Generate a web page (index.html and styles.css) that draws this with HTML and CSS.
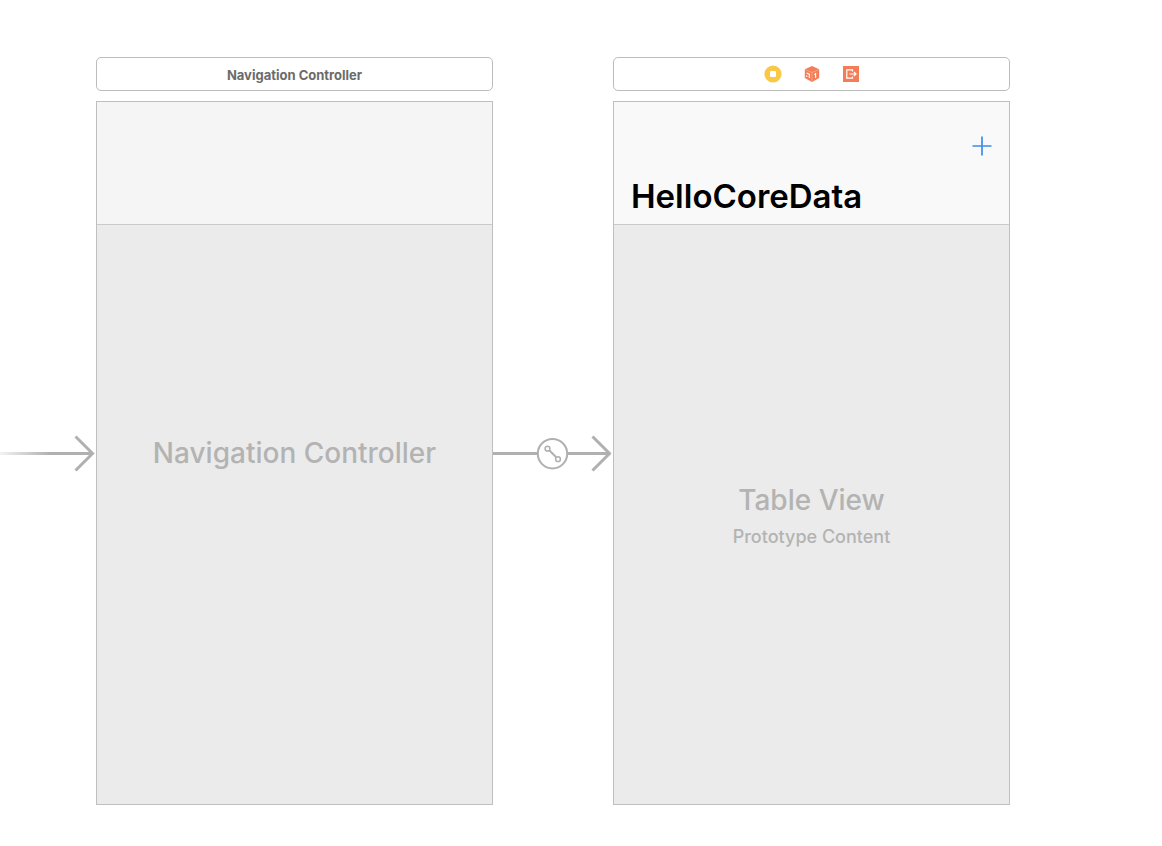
FILE: index.html
```
<!DOCTYPE html>
<html lang="en">
<head>
<meta charset="utf-8">
<title>Storyboard</title>
<link rel="stylesheet" href="styles.css">
</head>
<body>
<main class="canvas">
  <svg class="arrow entry" width="96" height="40" viewBox="0 0 96 40" aria-hidden="true">
    <defs>
      <linearGradient id="fade" gradientUnits="userSpaceOnUse" x1="0" y1="0" x2="50" y2="0">
        <stop offset="0" stop-color="#b0b0b0" stop-opacity=".15"/>
        <stop offset="1" stop-color="#b0b0b0"/>
      </linearGradient>
    </defs>
    <rect x="0" y="19" width="92" height="3" fill="url(#fade)"/>
    <path d="M75.500 3.500L92.500 20.500L75.500 37.500" fill="none" stroke="#b0b0b0" stroke-width="3"/>
  </svg>

  <section class="scene">
    <header class="dock"><h2 class="dock-title">Navigation Controller</h2></header>
    <div class="screen">
      <div class="navbar navbar-empty"></div>
      <div class="content"></div>
      <p class="placeholder screen-label">Navigation Controller</p>
    </div>
  </section>

  <svg class="arrow" width="120" height="40" viewBox="0 0 120 40" fill="none" stroke="#b0b0b0" aria-hidden="true">
    <path d="M0 20.500H45M75 20.500H116" stroke-width="3"/>
    <path d="M99.500 3.500L116.500 20.500L99.500 37.500" stroke-width="3"/>
    <circle cx="59.500" cy="20.700" r="14.700" fill="#fff" stroke-width="2"/>
    <path d="M56.500 17.500L63 24" stroke-width="2"/>
    <circle cx="54.500" cy="15.700" r="2.400" stroke-width="1.500"/>
    <circle cx="65" cy="26.200" r="2.400" stroke-width="1.500"/>
  </svg>

  <section class="scene">
    <header class="dock">
      <svg width="18" height="18" viewBox="0 0 18 18" role="img" aria-label="View Controller">
        <circle cx="9" cy="9" r="8.600" fill="#f9c846"/>
        <rect x="6" y="6" width="6" height="6" rx="1" fill="#fff"/>
      </svg>
      <svg width="18" height="18" viewBox="0 0 18 18" role="img" aria-label="First Responder">
        <path d="M9 1L16.200 4.200V13L9 17L1.800 13V4.200Z" fill="#f47d58"/>
        <path d="M2 4.500L9 7.500L16 4.500M9 7.500V16.500" fill="none" stroke="#f9a98c" stroke-width=".8"/>
        <path d="M3.600 8L6.300 9.200V13M3.700 10.500V12M11.400 9.600L12.600 8.700V13" fill="none" stroke="#fff" stroke-width="1.100"/>
      </svg>
      <svg width="18" height="18" viewBox="0 0 18 18" role="img" aria-label="Exit">
        <rect x="1" y="1" width="16" height="16" fill="#f47d58"/>
        <path d="M10.500 6.500V4.800H4.800V13.200H10.500V11.500M7.500 9H14M12 7L14 9L12 11" fill="none" stroke="#fff" stroke-width="1.200"/>
      </svg>
    </header>
    <div class="screen">
      <div class="navbar">
        <button class="add" type="button" aria-label="Add">
          <svg width="20" height="20" viewBox="0 0 20 20"><path d="M10 .5V19.500M.5 10H19.500" stroke="#3b8cea" stroke-width="1.700"/></svg>
        </button>
        <h1 class="title">HelloCoreData</h1>
      </div>
      <div class="content table">
        <p class="placeholder">Table View</p>
        <p class="placeholder-sub">Prototype Content</p>
      </div>
    </div>
  </section>
</main>
</body>
</html>
```
FILE: styles.css
```
* {
  box-sizing: border-box;
}

body,
h1,
h2,
p {
  margin: 0;
}

body {
  background: #fff;
  font-family: Inter, "Liberation Sans", sans-serif;
}

.canvas {
  display: grid;
  grid-template-columns: 96px 1fr 120px 1fr 152px;
  min-height: 100vh;
  padding: 57px 0 41px;
}

.scene {
  display: flex;
  flex-direction: column;
  gap: 10px;
}

.arrow {
  display: block;
  align-self: center;
  margin-top: 44px;
}

.dock {
  display: flex;
  align-items: center;
  justify-content: center;
  gap: 21px;
  height: 34px;
  border: 1px solid #bcbcbc;
  border-radius: 5px;
  background: #fff;
}

.dock-title {
  padding-top: 2px;
  color: #6b6b6b;
  font-size: 13px;
  font-weight: 700;
  line-height: 16px;
}

.screen {
  position: relative;
  display: flex;
  flex: 1;
  flex-direction: column;
  border: 1px solid #bfbfbf;
  background: #ebebeb;
}

.navbar {
  display: flex;
  flex-direction: column;
  justify-content: space-between;
  height: 123px;
  padding: 33px 17px 8px;
  border-bottom: 1px solid #cacaca;
  background: #f9f9f9;
}

.navbar-empty {
  background: #f5f5f5;
}

.add {
  display: flex;
  align-self: flex-end;
  padding: 1px 0;
  border: 0;
  background: none;
}

.title {
  color: #000;
  font-size: 33px;
  font-weight: 600;
  line-height: 40px;
}

.content {
  flex: 1;
}

.table {
  display: flex;
  flex-direction: column;
  align-items: center;
  justify-content: center;
  gap: 8px;
}

.placeholder {
  color: #b3b3b3;
  font-size: 28px;
  font-weight: 500;
  line-height: 36px;
  text-align: center;
}

.screen-label {
  position: absolute;
  inset: 0;
  display: flex;
  align-items: center;
  justify-content: center;
}

.placeholder-sub {
  color: #b3b3b3;
  font-size: 18px;
  font-weight: 500;
  line-height: 22px;
}
```
